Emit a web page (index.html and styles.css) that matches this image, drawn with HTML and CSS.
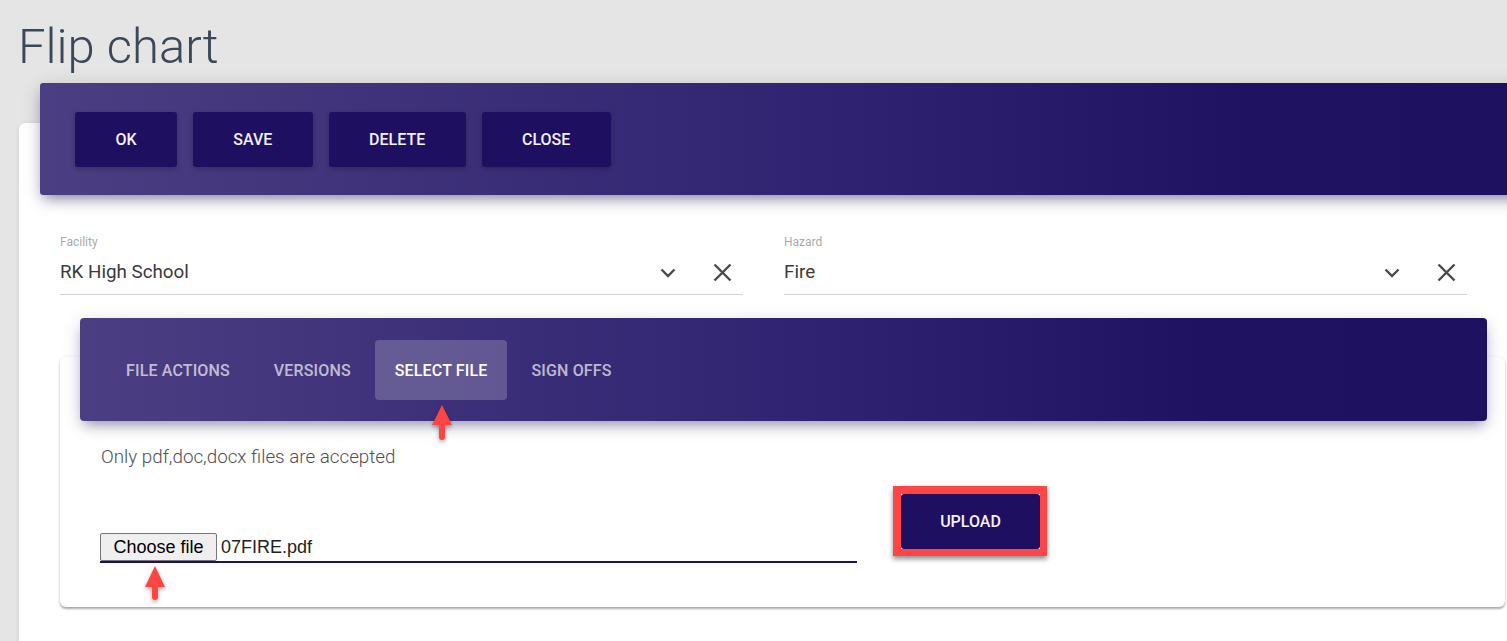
FILE: index.html
```html
<!DOCTYPE html>
<html lang="en">
<head>
<meta charset="utf-8">
<title>Flip chart</title>
<link rel="stylesheet" href="styles.css">
</head>
<body>
<div class="page">
  <h1 class="title">Flip chart</h1>
  <div class="card">
    <div class="card-header">
      <button class="btn btn-ok">OK</button>
      <button class="btn">SAVE</button>
      <button class="btn">DELETE</button>
      <button class="btn">CLOSE</button>
    </div>
    <div class="fields">
      <div class="field">
        <div class="field-label">Facility</div>
        <div class="field-row">
          <span class="field-value">RK High School</span>
          <span class="field-icons">
            <svg class="ico-chevron" width="16" height="10" viewBox="0 0 16 10"><path d="M1.5 1.5 L8 8 L14.5 1.5" fill="none" stroke="#4a4a4a" stroke-width="2.4"/></svg>
            <svg class="ico-close" width="19" height="19" viewBox="0 0 19 19"><path d="M1.5 1.5 L17.5 17.5 M17.5 1.5 L1.5 17.5" fill="none" stroke="#4a4a4a" stroke-width="2.4"/></svg>
          </span>
        </div>
      </div>
      <div class="field">
        <div class="field-label">Hazard</div>
        <div class="field-row">
          <span class="field-value">Fire</span>
          <span class="field-icons">
            <svg class="ico-chevron" width="16" height="10" viewBox="0 0 16 10"><path d="M1.5 1.5 L8 8 L14.5 1.5" fill="none" stroke="#4a4a4a" stroke-width="2.4"/></svg>
            <svg class="ico-close" width="19" height="19" viewBox="0 0 19 19"><path d="M1.5 1.5 L17.5 17.5 M17.5 1.5 L1.5 17.5" fill="none" stroke="#4a4a4a" stroke-width="2.4"/></svg>
          </span>
        </div>
      </div>
    </div>
    <div class="inner-card">
      <div class="tabs">
        <div class="tab">File actions</div>
        <div class="tab">Versions</div>
        <div class="tab tab-active">Select file</div>
        <div class="tab">Sign offs</div>
      </div>
      <div class="inner-body">
        <p class="hint">Only pdf,doc,docx files are accepted</p>
        <div class="upload-row">
          <div class="file-input">
            <span class="choose">Choose file</span>
            <span class="file-name">07FIRE.pdf</span>
          </div>
          <div class="upload-frame">
            <button class="btn btn-upload">UPLOAD</button>
          </div>
        </div>
      </div>
    </div>
  </div>
  <svg class="arrow arrow-tab" width="22" height="36" viewBox="0 0 22 36"><path d="M11 0 L21 20 L14 20 L14 32 Q14 35 11 35 Q8 35 8 32 L8 20 L1 20 Z" fill="#ff4444"/></svg>
  <svg class="arrow arrow-file" width="22" height="35" viewBox="0 0 22 35"><path d="M11 0 L21 21 L14 21 L14 31 Q14 34 11 34 Q8 34 8 31 L8 21 L1 21 Z" fill="#ff4444"/></svg>
</div>
</body>
</html>
```

FILE: styles.css
```css
* { box-sizing: border-box; }

html, body {
  margin: 0;
  padding: 0;
  background: #e5e5e5;
  overflow: hidden;
}

.page {
  position: relative;
  width: 1507px;
  height: 641px;
  overflow: hidden;
  font-family: Roboto, "Liberation Sans", Arial, sans-serif;
}

.title {
  margin: 0;
  padding: 19px 0 0 18px;
  height: 74px;
  font-size: 49px;
  line-height: 56px;
  font-weight: 300;
  color: #3c4858;
}

.card {
  display: flow-root;
  margin: 49px 0 0 19px;
  width: 1540px;
  height: 600px;
  background: #fff;
  border-radius: 6px;
  box-shadow: 0 1px 4px rgba(0, 0, 0, 0.12);
}

.card-header {
  margin: -40px 0 0 21px;
  height: 112px;
  padding-left: 35px;
  display: flex;
  align-items: center;
  gap: 16px;
  border-radius: 3px;
  background: linear-gradient(to right, #4b3e82 0%, #2e2170 55%, #1f1261 80%, #1e1160 100%);
  box-shadow: 0 4px 20px rgba(0, 0, 0, 0.14), 0 7px 12px -4px rgba(31, 18, 96, 0.45);
}

.btn {
  height: 55px;
  padding: 0 40.4px;
  border: 0;
  border-radius: 3px;
  background: #1e0f60;
  color: #f2f0fa;
  font-family: Roboto, "Liberation Sans", Arial, sans-serif;
  font-size: 16px;
  font-weight: 500;
  box-shadow: 0 2px 5px rgba(0, 0, 0, 0.22);
}

.fields {
  margin-top: 40px;
  padding: 0 0 0 41px;
  display: grid;
  grid-template-columns: 683px 683px;
  column-gap: 41px;
}

.field-label {
  font-size: 12px;
  line-height: 14px;
  color: #aaaaaa;
}

.field-row {
  height: 46px;
  display: flex;
  align-items: center;
  justify-content: space-between;
  border-bottom: 1px solid #d2d2d2;
  padding-top: 1px;
}

.field-value {
  font-size: 18.8px;
  color: #3a3a3a;
}

.field-icons {
  display: flex;
  align-items: center;
  margin-right: 11px;
}

.ico-chevron {
  display: block;
  margin-top: 2px;
}

.ico-close {
  display: block;
  margin-left: 37px;
}

.inner-card {
  display: flow-root;
  margin: 62px 0 0 41px;
  width: 1445px;
  background: #fff;
  border-radius: 6px;
  box-shadow: 0 1px 4px rgba(0, 0, 0, 0.1), 0 2px 2px rgba(0, 0, 0, 0.28);
}

.tabs {
  margin: -39px 18px 0 20px;
  height: 103px;
  padding: 22px 0 0 26px;
  display: flex;
  align-items: flex-start;
  gap: 4px;
  border-radius: 4px;
  background: linear-gradient(to right, #4b3e82 0%, #2e2170 55%, #1f1261 80%, #1e1160 100%);
  box-shadow: 0 4px 20px rgba(0, 0, 0, 0.12), 0 7px 12px -4px rgba(31, 18, 96, 0.4);
}

.tab {
  height: 60px;
  padding: 0 20px;
  display: flex;
  align-items: center;
  border-radius: 4px;
  font-size: 16px;
  font-weight: 500;
  letter-spacing: 0.15px;
  text-transform: uppercase;
  color: rgba(255, 255, 255, 0.68);
}

.tab-active {
  background: rgba(255, 255, 255, 0.2);
  color: #ffffff;
}

.inner-body {
  padding: 24px 40px 44px 40px;
}

.hint {
  margin: 0 0 0 1px;
  font-size: 18.8px;
  line-height: 24px;
  font-weight: 300;
  color: #4e4e58;
}

.upload-row {
  margin-top: 17px;
  display: flex;
  align-items: flex-end;
  gap: 36px;
}

.file-input {
  width: 757px;
  height: 30px;
  display: flex;
  align-items: flex-start;
  border-bottom: 2px solid #1e0f60;
  font-family: "Liberation Sans", Arial, sans-serif;
  font-size: 18px;
}

.choose {
  height: 28px;
  width: 117px;
  display: flex;
  align-items: center;
  justify-content: center;
  background: #efefef;
  border: 1px solid #767676;
  border-radius: 2px;
  color: #000;
}

.file-name {
  margin-left: 4px;
  line-height: 28px;
  color: #222;
}

.upload-frame {
  margin-bottom: 7px;
  border-style: solid;
  border-color: #ff4545;
  border-width: 8px 7px 7px 8px;
  box-shadow: 0 3px 5px rgba(0, 0, 0, 0.45);
  display: flex;
}

.btn-upload {
  width: 139px;
  padding: 0;
  box-shadow: none;
}

.arrow {
  position: absolute;
  filter: drop-shadow(0 2px 2px rgba(0, 0, 0, 0.35));
}

.arrow-tab {
  left: 431px;
  top: 405px;
}

.arrow-file {
  left: 144px;
  top: 566px;
}
```
